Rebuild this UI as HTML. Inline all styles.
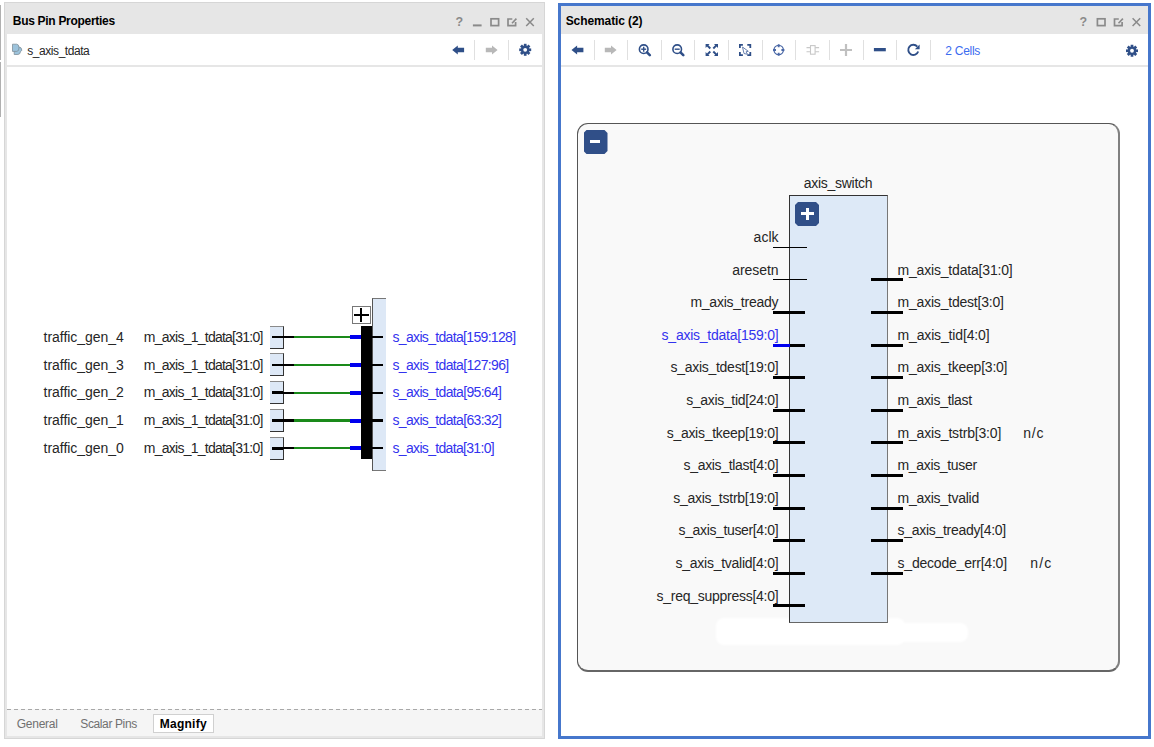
<!DOCTYPE html>
<html><head><meta charset="utf-8"><title>Vivado</title>
<style>
html,body{margin:0;padding:0;background:#fff;width:1154px;height:747px;overflow:hidden;position:relative}
.r{position:absolute}
.t{position:absolute;white-space:pre;line-height:1;font-family:"Liberation Sans",sans-serif}
.ov{position:absolute;left:0;top:0}
</style></head><body>
<div class="r" style="left:0.00px;top:5.00px;width:1.00px;height:55.00px;background:#b0b0b0;"></div>
<div class="r" style="left:0.00px;top:62.00px;width:1.00px;height:55.00px;background:#b0b0b0;"></div>
<div class="r" style="left:4.00px;top:2.00px;width:541.00px;height:737.00px;background:#d6d6d6;"></div>
<div class="r" style="left:5.00px;top:3.00px;width:539.00px;height:735.00px;background:#e6e6e6;"></div>
<div class="r" style="left:7.00px;top:34.00px;width:535.00px;height:31.00px;background:#ffffff;"></div>
<div class="r" style="left:7.00px;top:65.00px;width:535.00px;height:2.00px;background:#e6e6e6;"></div>
<div class="r" style="left:7.00px;top:67.00px;width:535.00px;height:642.00px;background:#ffffff;"></div>
<div class="r" style="left:7.00px;top:709.00px;width:535.00px;height:27.00px;background:#f5f5f5;"></div>
<div class="r" style="left:7px;top:709px;width:535px;height:1px;background:repeating-linear-gradient(90deg,#a8a8a8 0 4px,transparent 4px 7px)"></div>
<div class="r" style="left:153.30px;top:713.60px;width:60.50px;height:19.00px;background:#ffffff;box-sizing:border-box;border:1px solid #d0d0d0"></div>
<div class="r" style="left:474.00px;top:40.00px;width:1.00px;height:20.00px;background:#e0e0e0;"></div>
<div class="r" style="left:508.00px;top:40.00px;width:1.00px;height:20.00px;background:#e0e0e0;"></div>
<div class="r" style="left:558.00px;top:3.00px;width:593.00px;height:736.00px;background:#4677cc;"></div>
<div class="r" style="left:561.00px;top:6.00px;width:587.00px;height:28.00px;background:#e6e6e6;"></div>
<div class="r" style="left:561.00px;top:34.00px;width:587.00px;height:31.00px;background:#ffffff;"></div>
<div class="r" style="left:561.00px;top:65.00px;width:587.00px;height:2.00px;background:#e6e6e6;"></div>
<div class="r" style="left:561.00px;top:67.00px;width:587.00px;height:669.00px;background:#ffffff;"></div>
<div class="r" style="left:594.00px;top:40.00px;width:1.00px;height:20.00px;background:#e0e0e0;"></div>
<div class="r" style="left:627.00px;top:40.00px;width:1.00px;height:20.00px;background:#e0e0e0;"></div>
<div class="r" style="left:661.00px;top:40.00px;width:1.00px;height:20.00px;background:#e0e0e0;"></div>
<div class="r" style="left:694.00px;top:40.00px;width:1.00px;height:20.00px;background:#e0e0e0;"></div>
<div class="r" style="left:728.00px;top:40.00px;width:1.00px;height:20.00px;background:#e0e0e0;"></div>
<div class="r" style="left:762.00px;top:40.00px;width:1.00px;height:20.00px;background:#e0e0e0;"></div>
<div class="r" style="left:795.00px;top:40.00px;width:1.00px;height:20.00px;background:#e0e0e0;"></div>
<div class="r" style="left:829.00px;top:40.00px;width:1.00px;height:20.00px;background:#e0e0e0;"></div>
<div class="r" style="left:863.00px;top:40.00px;width:1.00px;height:20.00px;background:#e0e0e0;"></div>
<div class="r" style="left:896.00px;top:40.00px;width:1.00px;height:20.00px;background:#e0e0e0;"></div>
<div class="r" style="left:930.00px;top:40.00px;width:1.00px;height:20.00px;background:#e0e0e0;"></div>
<div class="r" style="left:269.60px;top:325.50px;width:14.10px;height:23.00px;background:#dde8f6;box-sizing:border-box;border-top:1.5px solid #8a8a8a;border-right:1px solid #333;border-bottom:1px solid #333"></div>
<div class="r" style="left:272.00px;top:335.70px;width:11.00px;height:2.80px;background:#000;"></div>
<div class="r" style="left:283.00px;top:336.00px;width:11.10px;height:2.20px;background:#000;"></div>
<div class="r" style="left:294.10px;top:336.00px;width:55.90px;height:2.20px;background:#1a8a1a;"></div>
<div class="r" style="left:350.00px;top:335.10px;width:11.00px;height:4.00px;background:#0000ee;"></div>
<div class="r" style="left:372.00px;top:335.90px;width:11.00px;height:2.40px;background:#000;"></div>
<div class="r" style="left:269.60px;top:353.30px;width:14.10px;height:23.00px;background:#dde8f6;box-sizing:border-box;border-top:1.5px solid #8a8a8a;border-right:1px solid #333;border-bottom:1px solid #333"></div>
<div class="r" style="left:272.00px;top:363.50px;width:11.00px;height:2.80px;background:#000;"></div>
<div class="r" style="left:283.00px;top:363.80px;width:11.10px;height:2.20px;background:#000;"></div>
<div class="r" style="left:294.10px;top:363.80px;width:55.90px;height:2.20px;background:#1a8a1a;"></div>
<div class="r" style="left:350.00px;top:362.90px;width:11.00px;height:4.00px;background:#0000ee;"></div>
<div class="r" style="left:372.00px;top:363.70px;width:11.00px;height:2.40px;background:#000;"></div>
<div class="r" style="left:269.60px;top:381.10px;width:14.10px;height:23.00px;background:#dde8f6;box-sizing:border-box;border-top:1.5px solid #8a8a8a;border-right:1px solid #333;border-bottom:1px solid #333"></div>
<div class="r" style="left:272.00px;top:391.30px;width:11.00px;height:2.80px;background:#000;"></div>
<div class="r" style="left:283.00px;top:391.60px;width:11.10px;height:2.20px;background:#000;"></div>
<div class="r" style="left:294.10px;top:391.60px;width:55.90px;height:2.20px;background:#1a8a1a;"></div>
<div class="r" style="left:350.00px;top:390.70px;width:11.00px;height:4.00px;background:#0000ee;"></div>
<div class="r" style="left:372.00px;top:391.50px;width:11.00px;height:2.40px;background:#000;"></div>
<div class="r" style="left:269.60px;top:408.90px;width:14.10px;height:23.00px;background:#dde8f6;box-sizing:border-box;border-top:1.5px solid #8a8a8a;border-right:1px solid #333;border-bottom:1px solid #333"></div>
<div class="r" style="left:272.00px;top:419.10px;width:11.00px;height:2.80px;background:#000;"></div>
<div class="r" style="left:283.00px;top:419.40px;width:11.10px;height:2.20px;background:#000;"></div>
<div class="r" style="left:294.10px;top:419.40px;width:55.90px;height:2.20px;background:#1a8a1a;"></div>
<div class="r" style="left:350.00px;top:418.50px;width:11.00px;height:4.00px;background:#0000ee;"></div>
<div class="r" style="left:372.00px;top:419.30px;width:11.00px;height:2.40px;background:#000;"></div>
<div class="r" style="left:269.60px;top:436.70px;width:14.10px;height:23.00px;background:#dde8f6;box-sizing:border-box;border-top:1.5px solid #8a8a8a;border-right:1px solid #333;border-bottom:1px solid #333"></div>
<div class="r" style="left:272.00px;top:446.90px;width:11.00px;height:2.80px;background:#000;"></div>
<div class="r" style="left:283.00px;top:447.20px;width:11.10px;height:2.20px;background:#000;"></div>
<div class="r" style="left:294.10px;top:447.20px;width:55.90px;height:2.20px;background:#1a8a1a;"></div>
<div class="r" style="left:350.00px;top:446.30px;width:11.00px;height:4.00px;background:#0000ee;"></div>
<div class="r" style="left:372.00px;top:447.10px;width:11.00px;height:2.40px;background:#000;"></div>
<div class="r" style="left:372.00px;top:297.50px;width:14.00px;height:173.50px;background:#dde8f6;box-sizing:border-box;border-top:1.5px solid #777;border-left:1px solid #555;border-bottom:1px solid #777"></div>
<div class="r" style="left:372.00px;top:335.90px;width:11.00px;height:2.40px;background:#000;"></div>
<div class="r" style="left:372.00px;top:363.70px;width:11.00px;height:2.40px;background:#000;"></div>
<div class="r" style="left:372.00px;top:391.50px;width:11.00px;height:2.40px;background:#000;"></div>
<div class="r" style="left:372.00px;top:419.30px;width:11.00px;height:2.40px;background:#000;"></div>
<div class="r" style="left:372.00px;top:447.10px;width:11.00px;height:2.40px;background:#000;"></div>
<div class="r" style="left:361.00px;top:326.00px;width:11.00px;height:133.00px;background:#000;"></div>
<div class="r" style="left:352.00px;top:306.00px;width:19.00px;height:18.00px;background:#fff;box-sizing:border-box;border:1px solid #777"></div>
<div class="r" style="left:354.00px;top:313.80px;width:14.50px;height:2.00px;background:#000;"></div>
<div class="r" style="left:360.00px;top:307.70px;width:2.00px;height:14.30px;background:#000;"></div>
<div class="r" style="left:577px;top:123px;width:543px;height:549px;background:#f9f9f9;box-sizing:border-box;border:1px solid #555;border-right:2px solid #808080;border-bottom:2px solid #666;border-radius:11px"></div>
<div class="r" style="left:583.5px;top:130px;width:24px;height:24px;background:#304f88;clip-path:polygon(3px 0,21px 0,24px 3px,24px 21px,21px 24px,3px 24px,0 21px,0 3px)"></div>
<div class="r" style="left:590.40px;top:139.90px;width:9.70px;height:3.20px;background:#fff;"></div>
<div class="r" style="left:716.00px;top:618.00px;width:189.00px;height:27.00px;background:#ffffff;border-radius:8px;filter:blur(1px)"></div>
<div class="r" style="left:760.00px;top:623.00px;width:208.00px;height:19.00px;background:#ffffff;border-radius:8px;filter:blur(1px)"></div>
<div class="r" style="left:789.00px;top:195.00px;width:98.50px;height:428.00px;background:#dde9f7;box-sizing:border-box;border:1px solid #333;border-right:1.5px solid #777;border-bottom:1.5px solid #666"></div>
<div class="r" style="left:795px;top:202px;width:24px;height:24px;background:#304f88;clip-path:polygon(3px 0,21px 0,24px 3px,24px 21px,21px 24px,3px 24px,0 21px,0 3px)"></div>
<div class="r" style="left:801.00px;top:212.00px;width:13.00px;height:3.30px;background:#fff;"></div>
<div class="r" style="left:806.00px;top:207.50px;width:3.00px;height:12.50px;background:#fff;"></div>
<div class="r" style="left:773.00px;top:246.80px;width:33.60px;height:1.00px;background:#000;"></div>
<div class="r" style="left:773.00px;top:279.40px;width:33.60px;height:1.00px;background:#000;"></div>
<div class="r" style="left:773.00px;top:311.00px;width:32.40px;height:3.00px;background:#000;"></div>
<div class="r" style="left:773.00px;top:343.60px;width:16.50px;height:3.00px;background:#0000ee;"></div>
<div class="r" style="left:789.50px;top:343.60px;width:15.90px;height:3.00px;background:#000;"></div>
<div class="r" style="left:773.00px;top:376.20px;width:32.40px;height:3.00px;background:#000;"></div>
<div class="r" style="left:773.00px;top:408.80px;width:32.40px;height:3.00px;background:#000;"></div>
<div class="r" style="left:773.00px;top:441.40px;width:32.40px;height:3.00px;background:#000;"></div>
<div class="r" style="left:773.00px;top:474.00px;width:32.40px;height:3.00px;background:#000;"></div>
<div class="r" style="left:773.00px;top:506.60px;width:32.40px;height:3.00px;background:#000;"></div>
<div class="r" style="left:773.00px;top:539.20px;width:32.40px;height:3.00px;background:#000;"></div>
<div class="r" style="left:773.00px;top:571.80px;width:32.40px;height:3.00px;background:#000;"></div>
<div class="r" style="left:773.00px;top:604.40px;width:32.40px;height:3.00px;background:#000;"></div>
<div class="r" style="left:870.70px;top:278.40px;width:32.60px;height:3.00px;background:#000;"></div>
<div class="r" style="left:870.70px;top:311.00px;width:32.60px;height:3.00px;background:#000;"></div>
<div class="r" style="left:870.70px;top:343.60px;width:32.60px;height:3.00px;background:#000;"></div>
<div class="r" style="left:870.70px;top:376.20px;width:32.60px;height:3.00px;background:#000;"></div>
<div class="r" style="left:870.70px;top:408.80px;width:32.60px;height:3.00px;background:#000;"></div>
<div class="r" style="left:870.70px;top:441.40px;width:32.60px;height:3.00px;background:#000;"></div>
<div class="r" style="left:870.70px;top:474.00px;width:32.60px;height:3.00px;background:#000;"></div>
<div class="r" style="left:870.70px;top:506.60px;width:32.60px;height:3.00px;background:#000;"></div>
<div class="r" style="left:870.70px;top:539.20px;width:32.60px;height:3.00px;background:#000;"></div>
<div class="r" style="left:870.70px;top:571.80px;width:32.60px;height:3.00px;background:#000;"></div>
<svg class="ov" width="1154" height="747" viewBox="0 0 1154 747"><text x="455.5" y="26.4" font-family="Liberation Sans" font-weight="bold" font-size="12.5" fill="#8a8a8a">?</text>
<rect x="472.9" y="24.4" width="8.7" height="2" fill="#8a8a8a"/>
<rect x="491.0" y="18.8" width="7.6" height="6.8" fill="none" stroke="#8a8a8a" stroke-width="1.7"/>
<path d="M512.3 19 h-4.3 v6.6 h7.6 v-3.6" fill="none" stroke="#8a8a8a" stroke-width="1.7"/>
<path d="M512.0 23.2 L516.4 18.6" stroke="#8a8a8a" stroke-width="1.6"/>
<path d="M526.2 18.3 L533.8 26.1 M533.8 18.3 L526.2 26.1" stroke="#8a8a8a" stroke-width="1.5"/>
<text x="1079.6" y="26.4" font-family="Liberation Sans" font-weight="bold" font-size="12.5" fill="#8a8a8a">?</text>
<rect x="1097.4" y="18.8" width="7.6" height="6.8" fill="none" stroke="#8a8a8a" stroke-width="1.7"/>
<path d="M1118.8 19 h-4.3 v6.6 h7.6 v-3.6" fill="none" stroke="#8a8a8a" stroke-width="1.7"/>
<path d="M1118.5 23.2 L1122.9 18.6" stroke="#8a8a8a" stroke-width="1.6"/>
<path d="M1132.6 18.3 L1140.2 26.1 M1140.2 18.3 L1132.6 26.1" stroke="#8a8a8a" stroke-width="1.5"/>
<path d="M452.2 50 L457.8 45.5 L457.8 47.8 L464.1 47.8 L464.1 52.2 L457.8 52.2 L457.8 54.5 Z" fill="#2f4f88"/>
<path d="M497.6 50 L492.0 45.5 L492.0 47.8 L485.8 47.8 L485.8 52.2 L492.0 52.2 L492.0 54.5 Z" fill="#b8b8b8"/>
<circle cx="525.20" cy="49.80" r="4.3" fill="#2f4f88"/><path d="M525.20 49.80 L531.20 49.80" stroke="#2f4f88" stroke-width="2.7"/><path d="M525.20 49.80 L529.44 54.04" stroke="#2f4f88" stroke-width="2.7"/><path d="M525.20 49.80 L525.20 55.80" stroke="#2f4f88" stroke-width="2.7"/><path d="M525.20 49.80 L520.96 54.04" stroke="#2f4f88" stroke-width="2.7"/><path d="M525.20 49.80 L519.20 49.80" stroke="#2f4f88" stroke-width="2.7"/><path d="M525.20 49.80 L520.96 45.56" stroke="#2f4f88" stroke-width="2.7"/><path d="M525.20 49.80 L525.20 43.80" stroke="#2f4f88" stroke-width="2.7"/><path d="M525.20 49.80 L529.44 45.56" stroke="#2f4f88" stroke-width="2.7"/><circle cx="525.20" cy="49.80" r="1.9" fill="#fff"/>
<path d="M14.2 47 h4.8 q2.5 0 2.9 3.3 l-1.4 1.2 q-0.3 3 -2.6 3 h-3.7 Z" fill="#9cc3dc" stroke="#7f8f99" stroke-width="0.8"/>
<path d="M12.5 44.2 h4.2 q2.3 0 2.3 3.6 q0 3.6 -2.3 3.6 h-4.2 Z" fill="#9cc3dc" stroke="#7f8f99" stroke-width="0.8"/>
<path d="M571.5 50 L577.1 45.5 L577.1 47.8 L583.4 47.8 L583.4 52.2 L577.1 52.2 L577.1 54.5 Z" fill="#2f4f88"/>
<path d="M616.6 50 L611.0 45.5 L611.0 47.8 L604.8 47.8 L604.8 52.2 L611.0 52.2 L611.0 54.5 Z" fill="#b8b8b8"/>
<circle cx="643.7" cy="49.2" r="4.3" fill="none" stroke="#2f4f88" stroke-width="1.6"/>
<path d="M647.0 52.4 L649.8 55.2" stroke="#2f4f88" stroke-width="2.6" stroke-linecap="round"/>
<path d="M641.2 49.2 h5" stroke="#2f4f88" stroke-width="1.4"/>
<path d="M643.7 46.7 v5" stroke="#2f4f88" stroke-width="1.4"/>
<circle cx="677.2" cy="49.2" r="4.3" fill="none" stroke="#2f4f88" stroke-width="1.6"/>
<path d="M680.5 52.4 L683.3 55.2" stroke="#2f4f88" stroke-width="2.6" stroke-linecap="round"/>
<path d="M674.7 49.2 h5" stroke="#2f4f88" stroke-width="1.4"/>
<g fill="#2f4f88"><path d="M705.6 44.0 h4 l-1.2 1.2 l2.6 2.6 l-1.4 1.4 l-2.6 -2.6 l-1.4 1.4 Z"/><path d="M718.0 44.0 h-4 l1.2 1.2 l-2.6 2.6 l1.4 1.4 l2.6 -2.6 l1.4 1.4 Z"/><path d="M705.6 56.0 h4 l-1.2 -1.2 l2.6 -2.6 l-1.4 -1.4 l-2.6 2.6 l-1.4 -1.4 Z"/><path d="M718.0 56.0 h-4 l1.2 -1.2 l-2.6 -2.6 l1.4 -1.4 l2.6 2.6 l1.4 -1.4 Z"/></g>
<path d="M739.9 47.9 v-3 h3 M747.3 44.9 h3 v3 M750.3 52.1 v3 h-3 M742.9 55.1 h-3 v-3" fill="none" stroke="#2f4f88" stroke-width="1.8"/>
<path d="M742.5 47.0 L748.3 51.3 L746.0 51.8 L747.5 54.3 L744.0 53.5 Z" fill="none" stroke="#6a82b0" stroke-width="1"/>
<circle cx="778.7" cy="50" r="4.7" fill="none" stroke="#4a68a6" stroke-width="1.3"/>
<path d="M778.7 44.3 v3 M778.7 52.7 v3 M773 50 h3 M781.4 50 h3" stroke="#4a68a6" stroke-width="1.8"/>
<rect x="810.5" y="45.6" width="4.6" height="8.6" fill="none" stroke="#c8c8c8" stroke-width="1.1"/>
<path d="M806.5 47.6 h4 M806.5 51.7 h4 M815.1 47.6 h4 M815.1 51.7 h4" stroke="#c8c8c8" stroke-width="1.1"/>
<path d="M840 50 h12 M846 44 v12" stroke="#c0c0c0" stroke-width="2.2"/>
<rect x="873.9" y="48" width="11.9" height="3.3" fill="#2f4f88"/>
<path d="M917.3 46.6 A5.1 5.1 0 1 0 918.2 51.5" fill="none" stroke="#2f4f88" stroke-width="1.9"/>
<path d="M919.6 44.6 L919.6 49.3 L914.9 49.3 Z" fill="#2f4f88"/>
<circle cx="1132.00" cy="50.75" r="4.3" fill="#2f4f88"/><path d="M1132.00 50.75 L1138.00 50.75" stroke="#2f4f88" stroke-width="2.7"/><path d="M1132.00 50.75 L1136.24 54.99" stroke="#2f4f88" stroke-width="2.7"/><path d="M1132.00 50.75 L1132.00 56.75" stroke="#2f4f88" stroke-width="2.7"/><path d="M1132.00 50.75 L1127.76 54.99" stroke="#2f4f88" stroke-width="2.7"/><path d="M1132.00 50.75 L1126.00 50.75" stroke="#2f4f88" stroke-width="2.7"/><path d="M1132.00 50.75 L1127.76 46.51" stroke="#2f4f88" stroke-width="2.7"/><path d="M1132.00 50.75 L1132.00 44.75" stroke="#2f4f88" stroke-width="2.7"/><path d="M1132.00 50.75 L1136.24 46.51" stroke="#2f4f88" stroke-width="2.7"/><circle cx="1132.00" cy="50.75" r="1.9" fill="#fff"/></svg>
<div class="t" style="left:12.80px;top:14.59px;font-size:12px;font-weight:bold;color:#000;letter-spacing:-0.299px">Bus Pin Properties</div>
<div class="t" style="left:27.30px;top:44.94px;font-size:12px;font-weight:normal;color:#262626;letter-spacing:-0.445px">s_axis_tdata</div>
<div class="t" style="left:565.70px;top:14.59px;font-size:12px;font-weight:bold;color:#000;letter-spacing:-0.094px">Schematic (2)</div>
<div class="t" style="left:945.30px;top:44.84px;font-size:12px;font-weight:normal;color:#3b6cf0;letter-spacing:-0.281px">2 Cells</div>
<div class="t" style="left:16.80px;top:718.14px;font-size:12px;font-weight:normal;color:#707070;letter-spacing:-0.267px">General</div>
<div class="t" style="left:80.30px;top:718.14px;font-size:12px;font-weight:normal;color:#707070;letter-spacing:-0.380px">Scalar Pins</div>
<div class="t" style="left:159.80px;top:718.14px;font-size:12px;font-weight:bold;color:#000;letter-spacing:0.243px">Magnify</div>
<div class="t" style="left:43.60px;top:329.75px;font-size:14px;font-weight:normal;color:#262626;letter-spacing:-0.034px">traffic_gen_4</div>
<div class="t" style="left:143.80px;top:329.75px;font-size:14px;font-weight:normal;color:#262626;letter-spacing:-0.751px">m_axis_1_tdata[31:0]</div>
<div class="t" style="left:392.50px;top:329.75px;font-size:14px;font-weight:normal;color:#3333ee;letter-spacing:-0.670px">s_axis_tdata[159:128]</div>
<div class="t" style="left:43.60px;top:357.50px;font-size:14px;font-weight:normal;color:#262626;letter-spacing:-0.034px">traffic_gen_3</div>
<div class="t" style="left:143.80px;top:357.50px;font-size:14px;font-weight:normal;color:#262626;letter-spacing:-0.751px">m_axis_1_tdata[31:0]</div>
<div class="t" style="left:392.50px;top:357.50px;font-size:14px;font-weight:normal;color:#3333ee;letter-spacing:-0.659px">s_axis_tdata[127:96]</div>
<div class="t" style="left:43.60px;top:385.25px;font-size:14px;font-weight:normal;color:#262626;letter-spacing:-0.034px">traffic_gen_2</div>
<div class="t" style="left:143.80px;top:385.25px;font-size:14px;font-weight:normal;color:#262626;letter-spacing:-0.751px">m_axis_1_tdata[31:0]</div>
<div class="t" style="left:392.50px;top:385.25px;font-size:14px;font-weight:normal;color:#3333ee;letter-spacing:-0.662px">s_axis_tdata[95:64]</div>
<div class="t" style="left:43.60px;top:413.00px;font-size:14px;font-weight:normal;color:#262626;letter-spacing:-0.034px">traffic_gen_1</div>
<div class="t" style="left:143.80px;top:413.00px;font-size:14px;font-weight:normal;color:#262626;letter-spacing:-0.751px">m_axis_1_tdata[31:0]</div>
<div class="t" style="left:392.50px;top:413.00px;font-size:14px;font-weight:normal;color:#3333ee;letter-spacing:-0.662px">s_axis_tdata[63:32]</div>
<div class="t" style="left:43.60px;top:440.75px;font-size:14px;font-weight:normal;color:#262626;letter-spacing:-0.034px">traffic_gen_0</div>
<div class="t" style="left:143.80px;top:440.75px;font-size:14px;font-weight:normal;color:#262626;letter-spacing:-0.751px">m_axis_1_tdata[31:0]</div>
<div class="t" style="left:392.50px;top:440.75px;font-size:14px;font-weight:normal;color:#3333ee;letter-spacing:-0.673px">s_axis_tdata[31:0]</div>
<div class="t" style="left:803.70px;top:175.95px;font-size:14px;font-weight:normal;color:#262626;letter-spacing:-0.269px">axis_switch</div>
<div class="t" style="left:753.60px;top:230.05px;font-size:14px;font-weight:normal;color:#262626;letter-spacing:0.031px">aclk</div>
<div class="t" style="left:732.20px;top:262.65px;font-size:14px;font-weight:normal;color:#262626;letter-spacing:-0.051px">aresetn</div>
<div class="t" style="left:690.40px;top:295.25px;font-size:14px;font-weight:normal;color:#262626;letter-spacing:-0.237px">m_axis_tready</div>
<div class="t" style="left:661.60px;top:327.85px;font-size:14px;font-weight:normal;color:#3333ee;letter-spacing:-0.246px">s_axis_tdata[159:0]</div>
<div class="t" style="left:670.50px;top:360.45px;font-size:14px;font-weight:normal;color:#262626;letter-spacing:-0.280px">s_axis_tdest[19:0]</div>
<div class="t" style="left:686.20px;top:393.05px;font-size:14px;font-weight:normal;color:#262626;letter-spacing:-0.326px">s_axis_tid[24:0]</div>
<div class="t" style="left:666.70px;top:425.65px;font-size:14px;font-weight:normal;color:#262626;letter-spacing:-0.285px">s_axis_tkeep[19:0]</div>
<div class="t" style="left:683.60px;top:458.25px;font-size:14px;font-weight:normal;color:#262626;letter-spacing:-0.337px">s_axis_tlast[4:0]</div>
<div class="t" style="left:673.20px;top:490.85px;font-size:14px;font-weight:normal;color:#262626;letter-spacing:-0.255px">s_axis_tstrb[19:0]</div>
<div class="t" style="left:678.50px;top:523.45px;font-size:14px;font-weight:normal;color:#262626;letter-spacing:-0.359px">s_axis_tuser[4:0]</div>
<div class="t" style="left:675.50px;top:556.05px;font-size:14px;font-weight:normal;color:#262626;letter-spacing:-0.253px">s_axis_tvalid[4:0]</div>
<div class="t" style="left:656.60px;top:588.65px;font-size:14px;font-weight:normal;color:#262626;letter-spacing:-0.270px">s_req_suppress[4:0]</div>
<div class="t" style="left:897.50px;top:262.65px;font-size:14px;font-weight:normal;color:#262626;letter-spacing:-0.182px">m_axis_tdata[31:0]</div>
<div class="t" style="left:897.50px;top:295.25px;font-size:14px;font-weight:normal;color:#262626;letter-spacing:-0.202px">m_axis_tdest[3:0]</div>
<div class="t" style="left:897.50px;top:327.85px;font-size:14px;font-weight:normal;color:#262626;letter-spacing:-0.148px">m_axis_tid[4:0]</div>
<div class="t" style="left:897.50px;top:360.45px;font-size:14px;font-weight:normal;color:#262626;letter-spacing:-0.227px">m_axis_tkeep[3:0]</div>
<div class="t" style="left:897.50px;top:393.05px;font-size:14px;font-weight:normal;color:#262626;letter-spacing:-0.283px">m_axis_tlast</div>
<div class="t" style="left:897.50px;top:425.65px;font-size:14px;font-weight:normal;color:#262626;letter-spacing:-0.176px">m_axis_tstrb[3:0]</div>
<div class="t" style="left:897.50px;top:458.25px;font-size:14px;font-weight:normal;color:#262626;letter-spacing:-0.333px">m_axis_tuser</div>
<div class="t" style="left:897.50px;top:490.85px;font-size:14px;font-weight:normal;color:#262626;letter-spacing:-0.261px">m_axis_tvalid</div>
<div class="t" style="left:897.50px;top:523.45px;font-size:14px;font-weight:normal;color:#262626;letter-spacing:-0.290px">s_axis_tready[4:0]</div>
<div class="t" style="left:897.50px;top:556.05px;font-size:14px;font-weight:normal;color:#262626;letter-spacing:-0.204px">s_decode_err[4:0]</div>
<div class="t" style="left:1023.20px;top:425.65px;font-size:14px;font-weight:normal;color:#262626;letter-spacing:0.806px">n/c</div>
<div class="t" style="left:1030.30px;top:556.05px;font-size:14px;font-weight:normal;color:#262626;letter-spacing:1.106px">n/c</div>
</body></html>
